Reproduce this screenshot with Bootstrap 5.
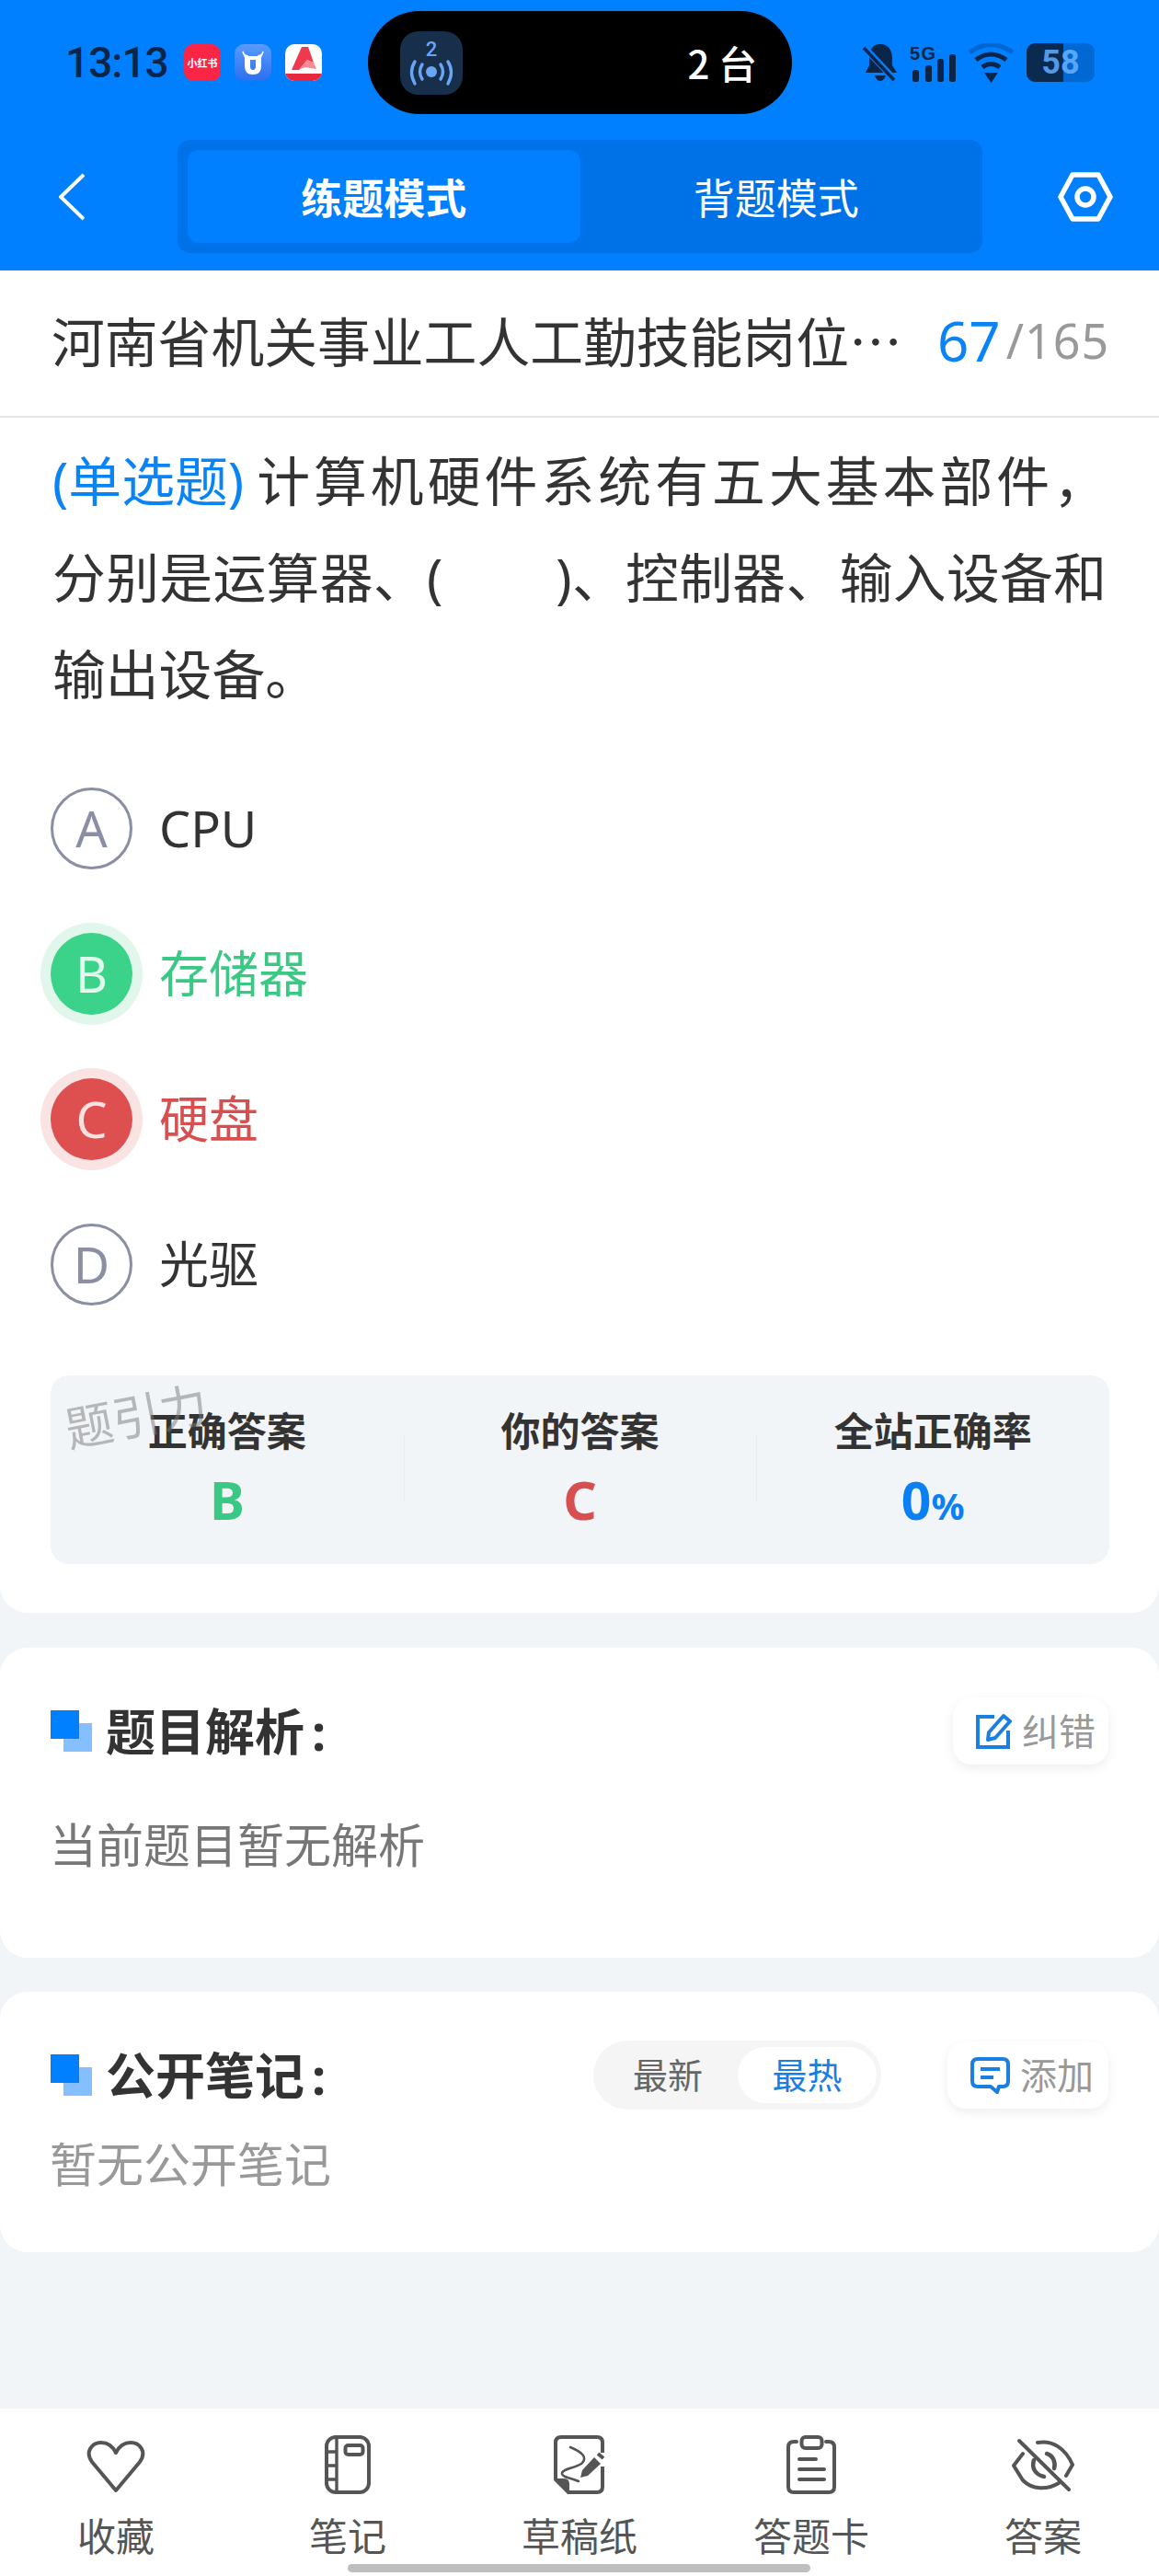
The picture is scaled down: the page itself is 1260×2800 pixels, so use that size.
<!DOCTYPE html>
<html lang="zh-CN">
<head>
    <meta charset="UTF-8">
    <meta name="viewport" content="width=device-width, initial-scale=1">
    <title>练题模式</title>
    <link href="https://cdn.jsdelivr.net/npm/bootstrap@5.3.0/dist/css/bootstrap.min.css" rel="stylesheet">
    <style>
        :root {
            --blue: #007fff;
            --link-blue: #1a7fe0;
            --ink: #333;
            --page: #f2f5f8;
        }

        body {
            width: 1260px;
            height: 2800px;
            overflow: hidden;
            background: var(--page);
            color: var(--ink);
            font-family: "Noto Sans", "Noto Sans CJK SC", sans-serif;
        }

        .cjk { font-family: "Noto Sans CJK SC", sans-serif; }

        /* header */
        .top-head { height: 294px; background: var(--blue); }
        .status-row { height: 124px; padding: 12px 70px 0 71px; }
        .clock { font: 500 46px/1 Roboto, sans-serif; letter-spacing: -1px; color: #0a2547; width: 129px; }
        .app-ico { width: 40px; height: 40px; border-radius: 10px; margin-right: 15px; overflow: hidden; }
        .app-red { background: #fb2545; color: #fff; font: 700 11px/40px "Noto Sans CJK SC", sans-serif; text-align: center; }
        .island { width: 461px; height: 112px; margin-left: 35px; background: #000; border-radius: 56px; padding: 0 38px 0 35px; }
        .island-ico { width: 68px; height: 69px; border-radius: 20px; background: #182f4c; }
        .island-txt { color: #fff; font: 500 42px/1 "Noto Sans CJK SC", sans-serif; }
        .status-right { margin-left: auto; gap: 13px; }
        .batt { width: 74px; height: 42px; border-radius: 9px; background: linear-gradient(90deg, #0a2a4f 54%, #0068d2 54%); font: 700 36px/42px Roboto, sans-serif; text-align: center; }
        .batt-a { color: #5598e6; }
        .batt-b { color: #5aa6f5; }

        .nav-row { height: 123px; margin-top: 28px; padding: 0 50px 0 64px; }
        .seg-wrap { width: 875px; height: 123px; margin-left: 101px; padding: 11px; background: #0072e8; border-radius: 14px; }
        .seg-item { flex: 1; height: 101px; color: #fff; font: 400 45px/101px "Noto Sans CJK SC", sans-serif; text-align: center; border-radius: 12px; }
        .seg-item.on { background: var(--blue); font-weight: 700; }
        .nav-gear { margin-left: 82px; }

        /* question sheet */
        .sheet-main { height: 1459px; background: #fff; border-radius: 0 0 30px 30px; }
        .title-row { height: 160px; padding: 0 54px 6px 56px; border-bottom: 2px solid #e5e5e5; white-space: nowrap; }
        .title-txt { flex: 0 0 930px; font-size: 57.8px; line-height: 1.2; }
        .count-now { flex: none; font-size: 60px; line-height: 1; color: #0a84f5; margin-left: 33px; }
        .count-all { flex: none; font-size: 52px; line-height: 1; letter-spacing: 1px; color: #999; margin-left: 6px; }
        .q-text { margin: 0; padding: 16px 57px 0 57px; font-size: 57.8px; line-height: 105px; }
        .q-fill { text-align: justify; text-align-last: justify; }
        .q-type { display: inline-block; margin-right: 10px; color: #0a84f5; }

        .opt-list { margin-top: 36px; padding-left: 55px; }
        .opt-row { height: 158px; }
        .opt-badge { width: 89px; height: 89px; margin-right: 29px; border-radius: 50%; font-size: 54px; line-height: 1; }
        .opt-plain { border: 3px solid #8a8fa3; color: #8a8fa3; }
        .opt-good { background: #3ad389; color: #e3f9ee; box-shadow: 0 0 0 11px #e1f7ec; }
        .opt-bad { background: #de4f4f; color: #fbe0e0; box-shadow: 0 0 0 11px #f9e3e3; }
        .opt-txt { font-size: 54px; line-height: 1; }
        .txt-good { color: #3ac984; }
        .txt-bad { color: #d84f4f; }

        .stat-panel { position: relative; width: 1151px; height: 205px; margin: 42px 0 0 55px; background: var(--page); border-radius: 20px; }
        .stat-col { height: 205px; padding-top: 34px; text-align: center; }
        .stat-col + .stat-col { background: linear-gradient(#e9ecf0, #e9ecf0) left 65px / 1px 73px no-repeat; }
        .stat-name { font-size: 43px; line-height: 54px; font-weight: 700; }
        .stat-val { margin-top: 16px; font-size: 57px; line-height: 62px; font-weight: 700; }
        .stat-val small { font-size: 40px; }
        .stamp { position: absolute; left: 15px; top: 18px; transform: rotate(-11deg); font-size: 52px; line-height: 1; color: rgba(120, 120, 120, .5); }

        /* analysis and notes */
        .sheet { background: #fff; border-radius: 30px; padding: 54px 55px 0 55px; }
        .sheet-a { height: 337px; margin-top: 38px; }
        .sheet-b { height: 283px; margin-top: 37px; }
        .head-row { height: 73px; }
        .mark-sq { position: relative; width: 45px; height: 45px; margin-right: 15px; }
        .mark-sq i { position: absolute; width: 31px; height: 31px; }
        .mark-sq i:first-child { right: 0; bottom: 0; background: #85bfff; }
        .mark-sq i:last-child { left: 0; top: 0; background: var(--blue); }
        .head-txt { font-size: 54px; line-height: 1; font-weight: 700; }
        .head-colon { margin-left: 8px; }
        .tool-btn { height: 73px; padding: 0 14px 0 25px; gap: 11px; background: #fff; border-radius: 20px; box-shadow: 0 4px 12px rgba(0, 0, 0, .07); color: #999; font-size: 40px; }
        .tool-wide { flex: 0 0 175px; }
        .order-pill { width: 313px; height: 75px; margin-left: auto; margin-right: 72px; padding: 7px 5px; background: #f5f5f5; border-radius: 38px; color: #666; font-size: 38px; line-height: 61px; text-align: center; }
        .order-pill div { flex: 1; }
        .order-pill .on { flex: 0 0 151px; background: #fff; border-radius: 31px; color: var(--link-blue); }
        .sheet-note { margin: 52px 0 0 -1px; font-size: 51px; line-height: 70px; color: #777; }
        .sheet-b .sheet-note { margin-top: 25px; color: #999; }

        /* bottom bar */
        .bottom-bar { position: relative; height: 182px; margin-top: auto; background: #fff; }
        .bar-item { height: 182px; padding-top: 29px; text-align: center; color: #555; }
        .bar-ico { height: 64px; }
        .bar-label { margin-top: 21px; font-size: 42px; line-height: 50px; }
        .home-line { position: absolute; left: 378px; top: 169px; width: 503px; height: 9px; border-radius: 5px; background: #bfbfbf; }
    </style>
</head>
<body class="d-flex flex-column">
    <header class="top-head">
        <div class="status-row d-flex align-items-center">
            <div class="clock">13:13</div>
            <div class="app-ico app-red">小红书</div>
            <div class="app-ico">
                <svg width="40" height="40" viewBox="0 0 40 40">
                    <defs><linearGradient id="ub" x1="0" y1="0" x2="0" y2="1"><stop offset="0" stop-color="#5a9bff"/><stop offset="1" stop-color="#2a6ff0"/></linearGradient></defs>
                    <rect width="40" height="40" fill="url(#ub)"/>
                    <path d="M11 13 V24 Q11 33 20 33 Q29 33 29 24 V13 Z M17 17 H23 V24 Q23 28 20 28 Q17 28 17 24 Z" fill="#fff" fill-rule="evenodd"/>
                    <path d="M9 8 Q10 13 15 13 H11 Z M31 8 Q30 13 25 13 H29 Z" fill="#fff" stroke="#fff" stroke-width="1.5"/>
                </svg>
            </div>
            <div class="app-ico">
                <svg width="40" height="40" viewBox="0 0 40 40">
                    <rect width="40" height="40" fill="#fff"/>
                    <rect y="32" width="40" height="8" fill="#e8283f"/>
                    <path d="M18 3 H25 L31 20 L24 17 L15 28 L7 28 Z" fill="#ee3a4e"/>
                    <path d="M24 17 L31 20 L34 27 L27 26 Q21 24 15 28 Z" fill="#f78a94"/>
                </svg>
            </div>
            <div class="island d-flex align-items-center justify-content-between">
                <div class="island-ico">
                    <svg width="68" height="69" viewBox="0 0 68 69">
                        <text x="34" y="27" text-anchor="middle" font-family="Roboto, sans-serif" font-size="22" font-weight="500" fill="#6aa5f5">2</text>
                        <circle cx="34" cy="44" r="6" fill="#6aa5f5"/>
                        <g fill="none" stroke="#6aa5f5" stroke-width="3.4" stroke-linecap="round">
                            <path d="M24 36 Q19 44 24 52"/><path d="M44 36 Q49 44 44 52"/>
                            <path d="M16 33 Q9 44 16 57"/><path d="M52 33 Q59 44 52 57"/>
                        </g>
                    </svg>
                </div>
                <div class="island-txt">2 台</div>
            </div>
            <div class="status-right d-flex align-items-center">
                <svg width="38" height="42" viewBox="0 0 38 42">
                    <path d="M19 1 C29 1 32 9 32 17 V24 L37 32 H3 L7 24 V15 C7 7 11 1 19 1 Z M13 35 H25 Q23 41 19 41 Q15 41 13 35 Z" fill="#0a2547"/>
                    <path d="M1 4 L35 40" stroke="#007fff" stroke-width="7"/>
                    <path d="M1 5 L34 40" stroke="#0a2547" stroke-width="3.6"/>
                </svg>
                <svg width="50" height="42" viewBox="0 0 50 42">
                    <text x="0" y="18" font-family="'Liberation Sans', sans-serif" font-size="20" font-weight="700" fill="#0a2547" textLength="28">5G</text>
                    <rect x="3" y="29" width="7" height="13" rx="2.5" fill="#0a2547"/>
                    <rect x="17" y="24" width="7" height="18" rx="2.5" fill="#0a2547"/>
                    <rect x="30" y="17" width="7" height="25" rx="2.5" fill="#0a2547"/>
                    <rect x="43" y="12" width="7" height="30" rx="2.5" fill="#0a2547"/>
                </svg>
                <svg width="51" height="43" viewBox="0 0 51 43">
                    <path d="M2 10 Q25 -7 49 10" fill="none" stroke="#0066d0" stroke-width="5"/>
                    <path d="M9 18 Q25 6 42 18" fill="none" stroke="#0a2547" stroke-width="5"/>
                    <path d="M16 26 Q25 19 35 26" fill="none" stroke="#0a2547" stroke-width="5"/>
                    <path d="M18 32 H33 L25.5 43 Z" fill="#0a2547"/>
                </svg>
                <div class="batt"><span class="batt-a">5</span><span class="batt-b">8</span></div>
            </div>
        </div>
        <div class="nav-row d-flex align-items-center">
            <svg width="28" height="52" viewBox="0 0 28 52">
                <path d="M27 2 L2 26 L27 50" fill="none" stroke="#fff" stroke-width="4"/>
            </svg>
            <div class="seg-wrap d-flex">
                <div class="seg-item on">练题模式</div>
                <div class="seg-item">背题模式</div>
            </div>
            <svg class="nav-gear" width="60" height="54" viewBox="0 0 60 54">
                <path d="M16 3 H44 L57 27 L44 51 H16 L3 27 Z" fill="none" stroke="#fff" stroke-width="5.5" stroke-linejoin="round"/>
                <circle cx="30" cy="27" r="9" fill="none" stroke="#fff" stroke-width="5.5"/>
            </svg>
        </div>
    </header>

    <main class="sheet-main">
        <div class="title-row d-flex align-items-center">
            <div class="title-txt cjk">河南省机关事业工人工勤技能岗位…</div>
            <span class="count-now">67</span>
            <span class="count-all">/165</span>
        </div>
        <div class="q-text">
            <div class="q-fill"><span class="q-type">(单选题)</span>计算机硬件系统有五大基本部件，</div>
            <div class="q-fill">分别是运算器、(&nbsp;&nbsp;&nbsp;&nbsp;&nbsp;&nbsp;&nbsp;&nbsp;)、控制器、输入设备和</div>
            <div>输出设备。</div>
        </div>
        <div class="opt-list">
            <div class="opt-row d-flex align-items-center">
                <span class="opt-badge opt-plain d-flex align-items-center justify-content-center">A</span>
                <span class="opt-txt">CPU</span>
            </div>
            <div class="opt-row d-flex align-items-center">
                <span class="opt-badge opt-good d-flex align-items-center justify-content-center">B</span>
                <span class="opt-txt txt-good">存储器</span>
            </div>
            <div class="opt-row d-flex align-items-center">
                <span class="opt-badge opt-bad d-flex align-items-center justify-content-center">C</span>
                <span class="opt-txt txt-bad">硬盘</span>
            </div>
            <div class="opt-row d-flex align-items-center">
                <span class="opt-badge opt-plain d-flex align-items-center justify-content-center">D</span>
                <span class="opt-txt">光驱</span>
            </div>
        </div>
        <div class="stat-panel">
            <div class="row g-0">
                <div class="col-4 stat-col">
                    <div class="stat-name">正确答案</div>
                    <div class="stat-val txt-good">B</div>
                </div>
                <div class="col-4 stat-col">
                    <div class="stat-name">你的答案</div>
                    <div class="stat-val txt-bad">C</div>
                </div>
                <div class="col-4 stat-col">
                    <div class="stat-name">全站正确率</div>
                    <div class="stat-val" style="color:#0a80f5">0<small>%</small></div>
                </div>
            </div>
            <div class="stamp">题引力</div>
        </div>
    </main>

    <section class="sheet sheet-a">
        <div class="head-row d-flex align-items-center justify-content-between">
            <div class="d-flex align-items-center">
                <div class="mark-sq"><i></i><i></i></div>
                <div class="head-txt">题目解析<span class="head-colon">:</span></div>
            </div>
            <div class="tool-btn d-flex align-items-center">
                <svg width="39" height="39" viewBox="0 0 39 39">
                    <path d="M20 4 H2 V37 H35 V19" fill="none" stroke="#1a7fe0" stroke-width="4"/>
                    <path d="M30 3 L37 9 L21 27 L13 29 L14 21 Z" fill="none" stroke="#1a7fe0" stroke-width="4" stroke-linejoin="round"/>
                </svg>
                <span>纠错</span>
            </div>
        </div>
        <div class="sheet-note">当前题目暂无解析</div>
    </section>

    <section class="sheet sheet-b">
        <div class="head-row d-flex align-items-center">
            <div class="mark-sq"><i></i><i></i></div>
            <div class="head-txt">公开笔记<span class="head-colon">:</span></div>
            <div class="order-pill d-flex">
                <div>最新</div>
                <div class="on">最热</div>
            </div>
            <div class="tool-btn tool-wide d-flex align-items-center">
                <svg width="43" height="40" viewBox="0 0 43 40">
                    <path d="M8 2 H35 Q41 2 41 8 V26 Q41 32 35 32 H31 L29 38 L22 32 H8 Q2 32 2 26 V8 Q2 2 8 2 Z" fill="none" stroke="#1a7fe0" stroke-width="4" stroke-linejoin="round"/>
                    <path d="M11 13 H32 M11 22 H25" stroke="#1a7fe0" stroke-width="4"/>
                </svg>
                <span>添加</span>
            </div>
        </div>
        <div class="sheet-note">暂无公开笔记</div>
    </section>

    <nav class="bottom-bar">
        <div class="row g-0">
            <div class="col bar-item">
                <div class="bar-ico">
                    <svg width="64" height="64" viewBox="0 0 64 64">
                        <path d="M32 60 L6 29 C-2 18 6 8 16 8 C24 8 29 13 32 19 C35 13 40 8 48 8 C58 8 66 18 58 29 Z" fill="none" stroke="#555" stroke-width="4" stroke-linejoin="round"/>
                    </svg>
                </div>
                <div class="bar-label">收藏</div>
            </div>
            <div class="col bar-item">
                <div class="bar-ico">
                    <svg width="50" height="64" viewBox="0 0 50 64">
                        <rect x="2" y="2" width="46" height="60" rx="10" fill="none" stroke="#555" stroke-width="4"/>
                        <path d="M13 2 V62 M2 18 H13 M2 33 H13 M2 48 H13" stroke="#555" stroke-width="3.4"/>
                        <rect x="22.5" y="11" width="19" height="10" rx="3" fill="none" stroke="#555" stroke-width="4"/>
                    </svg>
                </div>
                <div class="bar-label">笔记</div>
            </div>
            <div class="col bar-item">
                <div class="bar-ico">
                    <svg width="56" height="64" viewBox="0 0 56 64">
                        <path d="M53 19 V8 Q53 2 47 2 H8 Q2 2 2 8 V48 L16 62 H47 Q53 62 53 56 V34" fill="none" stroke="#555" stroke-width="4" stroke-linejoin="round"/>
                        <path d="M2 48 H11 Q16 48 16 53 V62 Z" fill="#555" stroke="#555" stroke-width="2"/>
                        <path d="M18 13 C30 18 38 24 30 31 C22 36 8 37 9 42 C10 46 18 46 27 50" fill="none" stroke="#555" stroke-width="2.6" stroke-linecap="round"/>
                        <path d="M44 24 L51 31 L37 44 L29 46 L31 38 Z" fill="#555"/>
                        <path d="M48 20 L54 25" stroke="#555" stroke-width="4"/>
                    </svg>
                </div>
                <div class="bar-label">草稿纸</div>
            </div>
            <div class="col bar-item">
                <div class="bar-ico">
                    <svg width="54" height="64" viewBox="0 0 54 64">
                        <path d="M11 7 H8 Q2 7 2 13 V56 Q2 62 8 62 H46 Q52 62 52 56 V13 Q52 7 46 7 H43" fill="none" stroke="#555" stroke-width="4" stroke-linecap="round"/>
                        <rect x="16.5" y="2" width="22" height="12" rx="4" fill="none" stroke="#555" stroke-width="4"/>
                        <path d="M14 26 H32 M14 37 H41 M14 48 H41" stroke="#555" stroke-width="4" stroke-linecap="round"/>
                    </svg>
                </div>
                <div class="bar-label">答题卡</div>
            </div>
            <div class="col bar-item">
                <div class="bar-ico">
                    <svg width="68" height="64" viewBox="0 0 68 64">
                        <path d="M28 8 C44 5 58 14 66 32 L59 44 M51 52 C38 60 22 59 12 49 L2 33 L12 20" fill="none" stroke="#555" stroke-width="4" stroke-linecap="round" stroke-linejoin="round"/>
                        <path d="M8 6 L62 59" stroke="#555" stroke-width="4" stroke-linecap="round"/>
                        <path d="M38 20 C45 22 48 30 46 36 M24 27 C21 36 26 43 35 45" fill="none" stroke="#555" stroke-width="4.5" stroke-linecap="round"/>
                    </svg>
                </div>
                <div class="bar-label">答案</div>
            </div>
        </div>
        <div class="home-line"></div>
    </nav>
    <script src="https://cdn.jsdelivr.net/npm/bootstrap@5.3.0/dist/js/bootstrap.bundle.min.js"></script>
</body>
</html>
